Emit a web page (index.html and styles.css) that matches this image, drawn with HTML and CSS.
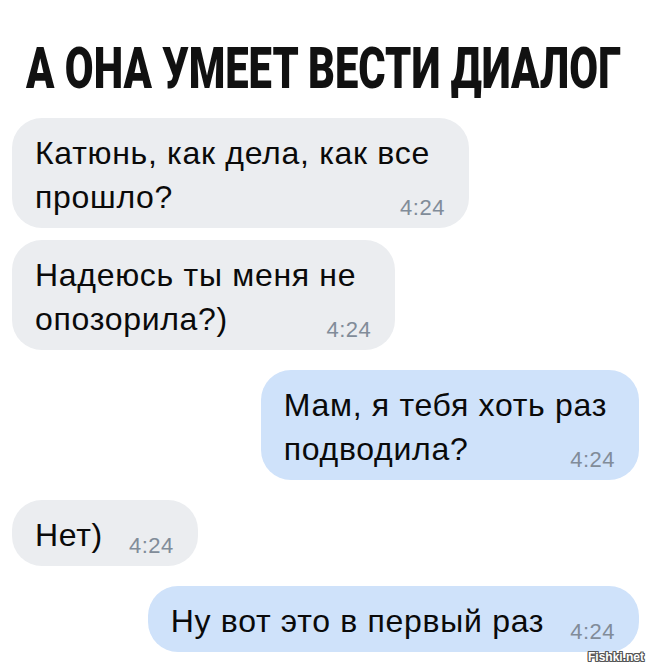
FILE: index.html
```html
<!DOCTYPE html>
<html lang="ru">
<head>
<meta charset="utf-8">
<title>А она умеет вести диалог</title>
<link rel="stylesheet" href="styles.css">
</head>
<body>
<div class="page">
  <h1 class="title"><span class="title-text">А ОНА УМЕЕТ ВЕСТИ ДИАЛОГ</span></h1>
  <div class="chat">
    <div class="group">
      <div class="bubble wrap"><span class="text">Катюнь, как дела, как все<br>прошло?</span><span class="time">4:24</span></div>
      <div class="bubble wrap"><span class="text">Надеюсь ты меня не<br>опозорила?)</span><span class="time">4:24</span></div>
    </div>
    <div class="group out">
      <div class="bubble wrap tight"><span class="text">Мам, я тебя хоть раз<br>подводила?</span><span class="time">4:24</span></div>
    </div>
    <div class="group">
      <div class="bubble"><span class="text">Нет)</span><span class="time">4:24</span></div>
    </div>
    <div class="group out">
      <div class="bubble"><span class="text">Ну вот это в первый раз</span><span class="time">4:24</span></div>
    </div>
  </div>
  <div class="watermark">Fishki.net</div>
</div>
</body>
</html>
```
FILE: styles.css
```css
html, body {
  margin: 0;
  padding: 0;
  background: #ffffff;
}

.page {
  position: relative;
  width: 650px;
  height: 667px;
  box-sizing: border-box;
  padding: 39px 11px 0 12px;
  overflow: hidden;
  font-family: "Liberation Sans", Arial, sans-serif;
  color: #000;
}

.title {
  margin: 0 0 21px;
  padding-left: 14px;
  height: 58px;
  font-family: Roboto, "Liberation Sans", sans-serif;
  font-weight: 900;
  font-size: 58px;
  line-height: 58px;
  color: #111;
  white-space: nowrap;
}

.title-text {
  display: inline-block;
  transform: scaleX(0.72);
  transform-origin: left center;
}

.chat {
  display: flex;
  flex-direction: column;
  gap: 20px;
}

.group {
  display: flex;
  flex-direction: column;
  align-items: flex-start;
  gap: 12px;
}

.group.out {
  align-items: flex-end;
}

.bubble {
  display: grid;
  grid-template-columns: auto auto;
  column-gap: 26px;
  padding: 13px 24px 9px 23px;
  border-radius: 30px;
  background: #ebedf0;
  font-size: 32px;
  line-height: 44px;
  letter-spacing: 0.7px;
  white-space: nowrap;
  color: #0a0a0a;
}

.out .bubble {
  background: #cfe2fa;
}

.text {
  grid-column: 1;
  grid-row: 1;
  align-self: start;
}

.time {
  grid-column: 2;
  grid-row: 1;
  align-self: end;
  font-size: 22px;
  line-height: 22px;
  letter-spacing: 0.5px;
  color: #818c99;
}

.bubble.wrap {
  grid-template-columns: auto;
}

.bubble.wrap .text {
  margin-right: 15px;
}

.bubble.wrap.tight .text {
  margin-right: 8px;
}

.bubble.wrap .time {
  grid-column: 1;
  justify-self: end;
}

.watermark {
  position: absolute;
  right: 6px;
  bottom: 4px;
  font-family: "Liberation Sans", Arial, sans-serif;
  font-weight: 700;
  font-size: 12px;
  line-height: 12px;
  color: #ffffff;
  text-shadow: 1px 0 0 #555, -1px 0 0 #555, 0 1px 0 #555, 0 -1px 0 #555,
    1px 1px 0 #555, -1px -1px 0 #555, 1px -1px 0 #555, -1px 1px 0 #555;
}
```
